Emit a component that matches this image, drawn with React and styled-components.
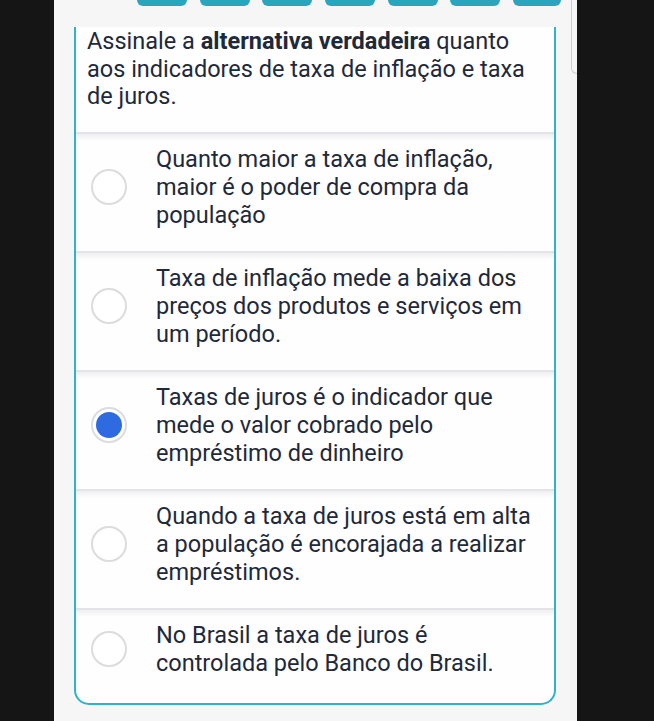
import styled, { createGlobalStyle } from "styled-components";

const GlobalStyle = createGlobalStyle`
  html, body {
    margin: 0;
    padding: 0;
    background: #151515;
    height: 721px;
    overflow: hidden;
    font-family: Roboto, "Noto Sans", sans-serif;
  }
`;

const Screen = styled.div`
  display: flex;
  height: 721px;
`;

const Panel = styled.div`
  position: relative;
  margin-left: 54px;
  width: 523px;
  height: 721px;
  box-sizing: border-box;
  padding: 0 21px 0 20px;
  background: #f6f6f7;
`;

const Tabs = styled.div`
  display: flex;
  gap: 12.7px;
  margin-left: 63px;
  height: 6px;
`;

const Tab = styled.div`
  flex: 0 0 ${(p) => p.$w || 50}px;
  height: 6px;
  background: #2aa5bd;
  border-radius: 0 0 6px 6px;
`;

const ScrollEdge = styled.div`
  position: absolute;
  right: 0;
  top: -10px;
  width: 5px;
  height: 82px;
  border: 1px solid #cfcfd2;
  border-right: none;
  border-radius: 0 0 0 6px;
`;

const Card = styled.div`
  margin-top: 21px;
  width: 482px;
  box-sizing: border-box;
  background: #fefefe;
  border: 2px solid #2cb4c8;
  border-top: none;
  border-radius: 0 0 15px 15px;
  padding-bottom: 4px;
  color: #1e293a;
`;

const Question = styled.p`
  margin: 0;
  padding: 1px 12px 21px 11px;
  font-size: 23.5px;
  line-height: 27.5px;

  strong {
    font-weight: 700;
  }
`;

const Option = styled.label`
  display: flex;
  align-items: center;
  gap: 29px;
  padding: 11px 18px 22px 15px;
  border-top: 2px solid #e4e4e6;
  background: linear-gradient(#efeff1, rgba(255, 255, 255, 0) 7px);
  cursor: pointer;
`;

const Radio = styled.span`
  position: relative;
  flex: 0 0 36px;
  height: 36px;
  box-sizing: border-box;
  border-radius: 50%;
  border: 2px solid #dcdcde;
  background: #fff;

  &::after {
    content: "";
    position: absolute;
    inset: 3px;
    border-radius: 50%;
    background: ${(p) => (p.$checked ? "#2f6be0" : "transparent")};
  }
`;

const OptionText = styled.span`
  font-size: 23.5px;
  line-height: 28px;
`;

const options = [
  "Quanto maior a taxa de inflação, maior é o poder de compra da população",
  "Taxa de inflação mede a baixa dos preços dos produtos e serviços em um período.",
  "Taxas de juros é o indicador que mede o valor cobrado pelo empréstimo de dinheiro",
  "Quando a taxa de juros está em alta a população é encorajada a realizar empréstimos.",
  "No Brasil a taxa de juros é controlada pelo Banco do Brasil.",
];

export default function App() {
  return (
    <>
      <GlobalStyle />
      <Screen>
        <Panel>
          <ScrollEdge />
          <Tabs>
            {[50, 50, 50, 50, 50, 50, 48].map((w, i) => (
              <Tab key={i} $w={w} />
            ))}
          </Tabs>
          <Card>
            <Question>
              Assinale a <strong>alternativa verdadeira</strong> quanto aos
              indicadores de taxa de inflação e taxa de juros.
            </Question>
            {options.map((text, i) => (
              <Option key={i}>
                <Radio $checked={i === 2} />
                <OptionText>{text}</OptionText>
              </Option>
            ))}
          </Card>
        </Panel>
      </Screen>
    </>
  );
}
